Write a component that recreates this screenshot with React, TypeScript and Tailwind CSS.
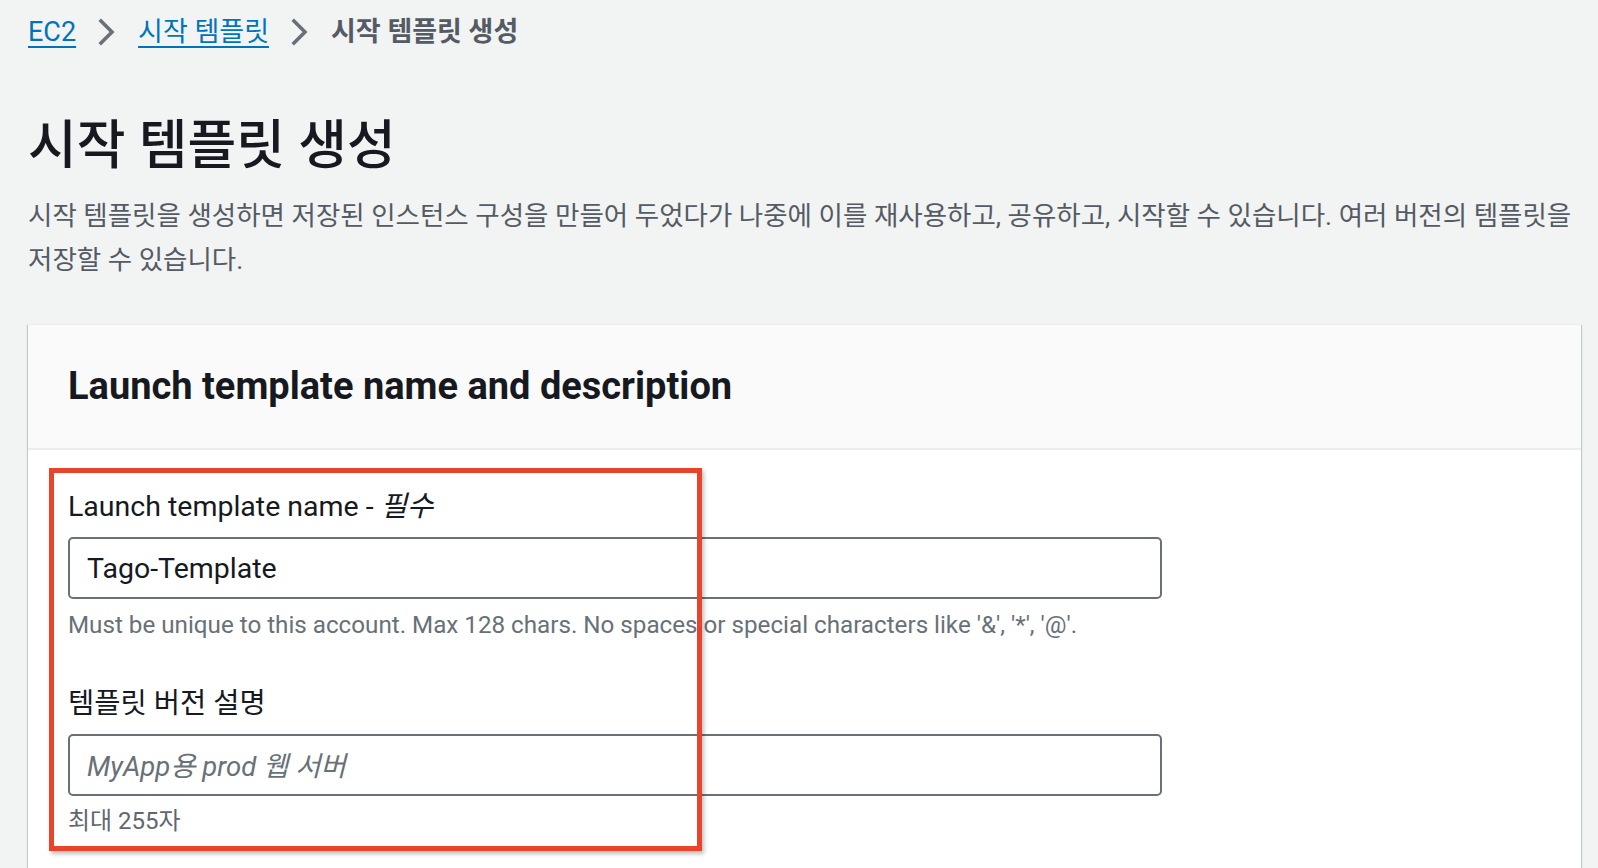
const font = { fontFamily: '"Roboto", "Noto Sans CJK KR", sans-serif' };

function Chevron() {
  return (
    <svg width="20" height="32" viewBox="0 0 20 32" className="mx-[21px] shrink-0">
      <polyline points="4,5 15,16 4,27" fill="none" stroke="#687078" strokeWidth="3.6" strokeLinecap="square" />
    </svg>
  );
}

export default function App() {
  return (
    <div className="min-h-screen w-full bg-[#f2f3f3] text-[#16191f] overflow-hidden" style={font}>
      <div className="pl-[28px] pr-[17px]">
        {/* breadcrumb */}
        <nav className="flex items-center h-[64px] text-[27px] leading-none">
          <a className="text-[#0073bb] underline underline-offset-[5px] decoration-2">EC2</a>
          <Chevron />
          <a className="text-[#0073bb] underline underline-offset-[5px] decoration-2">시작 템플릿</a>
          <Chevron />
          <span className="font-bold text-[#545b64]">시작 템플릿 생성</span>
        </nav>

        {/* title */}
        <h1 className="mt-[50px] text-[53px] leading-[64px] font-medium">시작 템플릿 생성</h1>
        <p className="mt-[16px] text-[26.5px] leading-[44px] text-[#545b64]">
          시작 템플릿을 생성하면 저장된 인스턴스 구성을 만들어 두었다가 나중에 이를 재사용하고, 공유하고, 시작할 수 있습니다. 여러 버전의 템플릿을 저장할 수 있습니다.
        </p>

        {/* card */}
        <div className="mt-[42px] bg-white shadow-[0_1px_1px_0_rgba(0,28,36,0.3),1px_1px_1px_0_rgba(0,28,36,0.15),-1px_1px_1px_0_rgba(0,28,36,0.15)] border-t border-[#eaeded]">
          <div className="h-[125px] bg-[#fafafa] border-b-2 border-[#eaeded] flex items-center px-[40px]">
            <h2 className="text-[38px] font-bold">Launch template name and description</h2>
          </div>
          <div className="relative px-[40px] pt-[39px] pb-[40px]">
            <div className="flex flex-col">
              <label className="text-[28.5px] leading-[36px]">
                Launch template name - <i>필수</i>
              </label>
              <div className="mt-[12px] w-[1094px] h-[62px] border-2 border-[#687078] rounded-[5px] bg-white flex items-center px-[17px] pt-[3px] text-[28.5px]">
                Tago-Template
              </div>
              <p className="mt-[10px] text-[24.2px] leading-[32px] text-[#687078]">
                Must be unique to this account. Max 128 chars. No spaces or special characters like '&amp;', '*', '@'.
              </p>

              <label className="mt-[45px] text-[28.5px] leading-[36px]">템플릿 버전 설명</label>
              <div className="mt-[12px] w-[1094px] h-[62px] border-2 border-[#687078] rounded-[5px] bg-white flex items-center px-[17px] pt-[3px] text-[27.5px] italic text-[#687078]">
                MyApp용 prod 웹 서버
              </div>
              <p className="mt-[9px] text-[24px] leading-[32px] text-[#5f6770]">최대 255자</p>
            </div>

            {/* annotation highlight */}
            <div className="absolute left-[21px] top-[18px] w-[653px] h-[383px] border-[5px] border-[#e9432b] shadow-[2px_3px_4px_rgba(0,0,0,0.25)] pointer-events-none" />
          </div>
        </div>
      </div>
    </div>
  );
}
